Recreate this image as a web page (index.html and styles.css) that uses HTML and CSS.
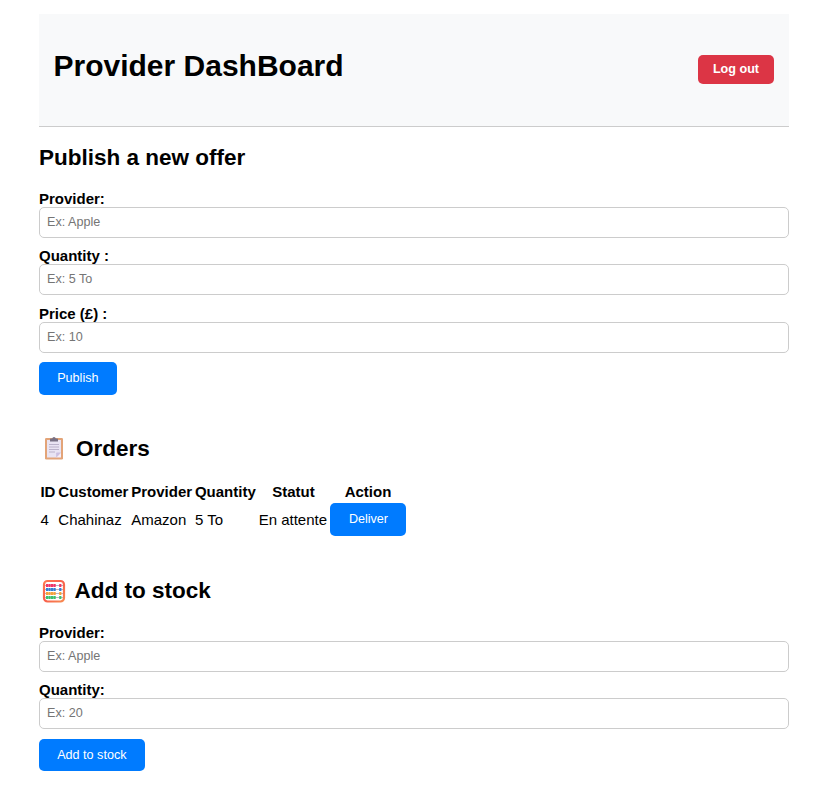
FILE: index.html
```html
<!DOCTYPE html>
<html lang="en">
<head>
<meta charset="utf-8">
<title>Provider DashBoard</title>
<link rel="stylesheet" href="styles.css">
</head>
<body>
<header class="header">
  <h1>Provider DashBoard</h1>
  <button class="logout">Log out</button>
</header>
<section class="publish">
  <h2>Publish a new offer</h2>
  <form>
    <label for="p1">Provider:</label>
    <input id="p1" placeholder="Ex: Apple">
    <label for="q1">Quantity :</label>
    <input id="q1" placeholder="Ex: 5 To">
    <label for="c1">Price (£) :</label>
    <input id="c1" placeholder="Ex: 10">
    <button class="btn" type="button">Publish</button>
  </form>
</section>
<section class="orders">
  <h2><svg class="icon" viewBox="0 0 28 28" aria-hidden="true">
    <rect x="5" y="4" width="18" height="21.5" rx="1.2" fill="#e3a478"/>
    <path d="M7 6h14v12.500L16.500 23.500H7z" fill="#e9e4f3"/>
    <path d="M21 18.500v5h-4.800z" fill="#f3eefc"/>
    <path d="M16.200 23.500v-4.300q0-.7.700-.7H21z" fill="#cbbfe0"/>
    <path d="M10 7.500V5.200q0-.7.700-.7h1.500q.3-1.500 1.800-1.500t1.800 1.500h1.500q.7 0 .7.700v2.300z" fill="#777083"/>
    <path d="M9 10.500h10M9 13h10M9 15.500h10M9 18h6" stroke="#b5adc6" stroke-width=".9"/>
  </svg><span>Orders</span></h2>
  <table>
    <thead><tr><th>ID</th><th>Customer</th><th>Provider</th><th>Quantity</th><th class="status">Statut</th><th>Action</th></tr></thead>
    <tbody><tr><td>4</td><td>Chahinaz</td><td>Amazon</td><td>5 To</td><td>En attente</td><td class="action"><button class="btn deliver">Deliver</button></td></tr></tbody>
  </table>
</section>
<section class="stock">
  <h2><svg class="icon" viewBox="0 0 28 28" aria-hidden="true">
    <defs><linearGradient id="frame" x1="0" y1="0" x2="1" y2="1"><stop offset="0" stop-color="#ff7852"/><stop offset=".5" stop-color="#f8604b"/><stop offset="1" stop-color="#f78a50"/></linearGradient></defs>
    <rect x="4" y="4" width="20" height="20.500" rx="3.500" fill="#fff" stroke="url(#frame)" stroke-width="2.200"/>
    <path d="M5 8.500h18M5 12.500h18M5 16.500h18M5 20.500h18" stroke="#a9a0b3" stroke-width=".8"/>
    <g fill="none" stroke-width="3" stroke-dasharray="2.200 .3">
      <path d="M6 8.500h9.700M19.200 8.500h2.200" stroke="#f03568"/>
      <path d="M6 12.500h9.700M19.200 12.500h2.200" stroke="#347fd5"/>
      <path d="M6 16.500h9.700M19.200 16.500h2.200" stroke="#f5a33d"/>
      <path d="M6 20.500h9.700M19.200 20.500h2.200" stroke="#3bc16e"/>
    </g>
  </svg><span>Add to stock</span></h2>
  <form>
    <label for="p2">Provider:</label>
    <input id="p2" placeholder="Ex: Apple">
    <label for="q2">Quantity:</label>
    <input id="q2" placeholder="Ex: 20">
    <button class="btn add" type="button">Add to stock</button>
  </form>
</section>
</body>
</html>
```
FILE: styles.css
```css
* { box-sizing: border-box; }
body {
  margin: 14px 26px 0 39px;
  background: #fff;
  color: #000;
  font: 15px/17px "Liberation Sans", Arial, sans-serif;
}
.header {
  display: flex;
  justify-content: space-between;
  align-items: flex-start;
  height: 113px;
  padding: 0 15px 0 14.5px;
  background: #f8f9fa;
  border-bottom: 1px solid #ccc;
}
h1 { margin: 35px 0 0; font-size: 30px; line-height: 34px; }
h2 {
  display: flex;
  align-items: center;
  height: 26px;
  margin: 0;
  font-size: 22.5px;
  line-height: 26px;
}
button { border: 0; color: #fff; font: 12.6px/15px "Liberation Sans", Arial, sans-serif; }
.logout {
  width: 76px;
  height: 29px;
  margin-top: 41px;
  padding: 0;
  border-radius: 5px;
  background: #dc3545;
  font-weight: bold;
}
.publish { padding-top: 18px; }
form { display: flex; flex-direction: column; align-items: flex-start; margin-top: 19px; }
label { height: 17px; font-weight: bold; }
input {
  width: 100%;
  height: 31px;
  margin: 0 0 9.4px;
  padding: 0 7px 1px;
  border: 1px solid #ccc;
  border-radius: 5px;
  font: 12.6px "Liberation Sans", Arial, sans-serif;
}
input::placeholder { color: #757575; }
.btn { height: 33px; padding: 0 18.2px; border-radius: 5px; background: #007bff; }
.icon { width: 28px; height: 28px; flex: none; }
.orders { margin-top: 40px; }
.orders h2 span { padding-top: 1px; }
.orders .icon { margin: 0 8px 0 1px; }
table { margin: 19px 0 0 -1px; border-spacing: 2px; }
th, td { padding: 1px 0.45px; white-space: nowrap; }
th { height: 19px; }
th.status { padding-left: 1.5px; }
td.action { padding: 0 0 0 1px; }
.deliver { display: block; width: 76px; padding: 0; }
.stock { margin-top: 40px; }
.stock form { margin-top: 20px; }
.stock input { margin-bottom: 9px; }
.stock input:last-of-type { margin-bottom: 10px; }
.add { height: 32px; }
.stock .icon { margin: 0 7px 0 0.5px; }
```
